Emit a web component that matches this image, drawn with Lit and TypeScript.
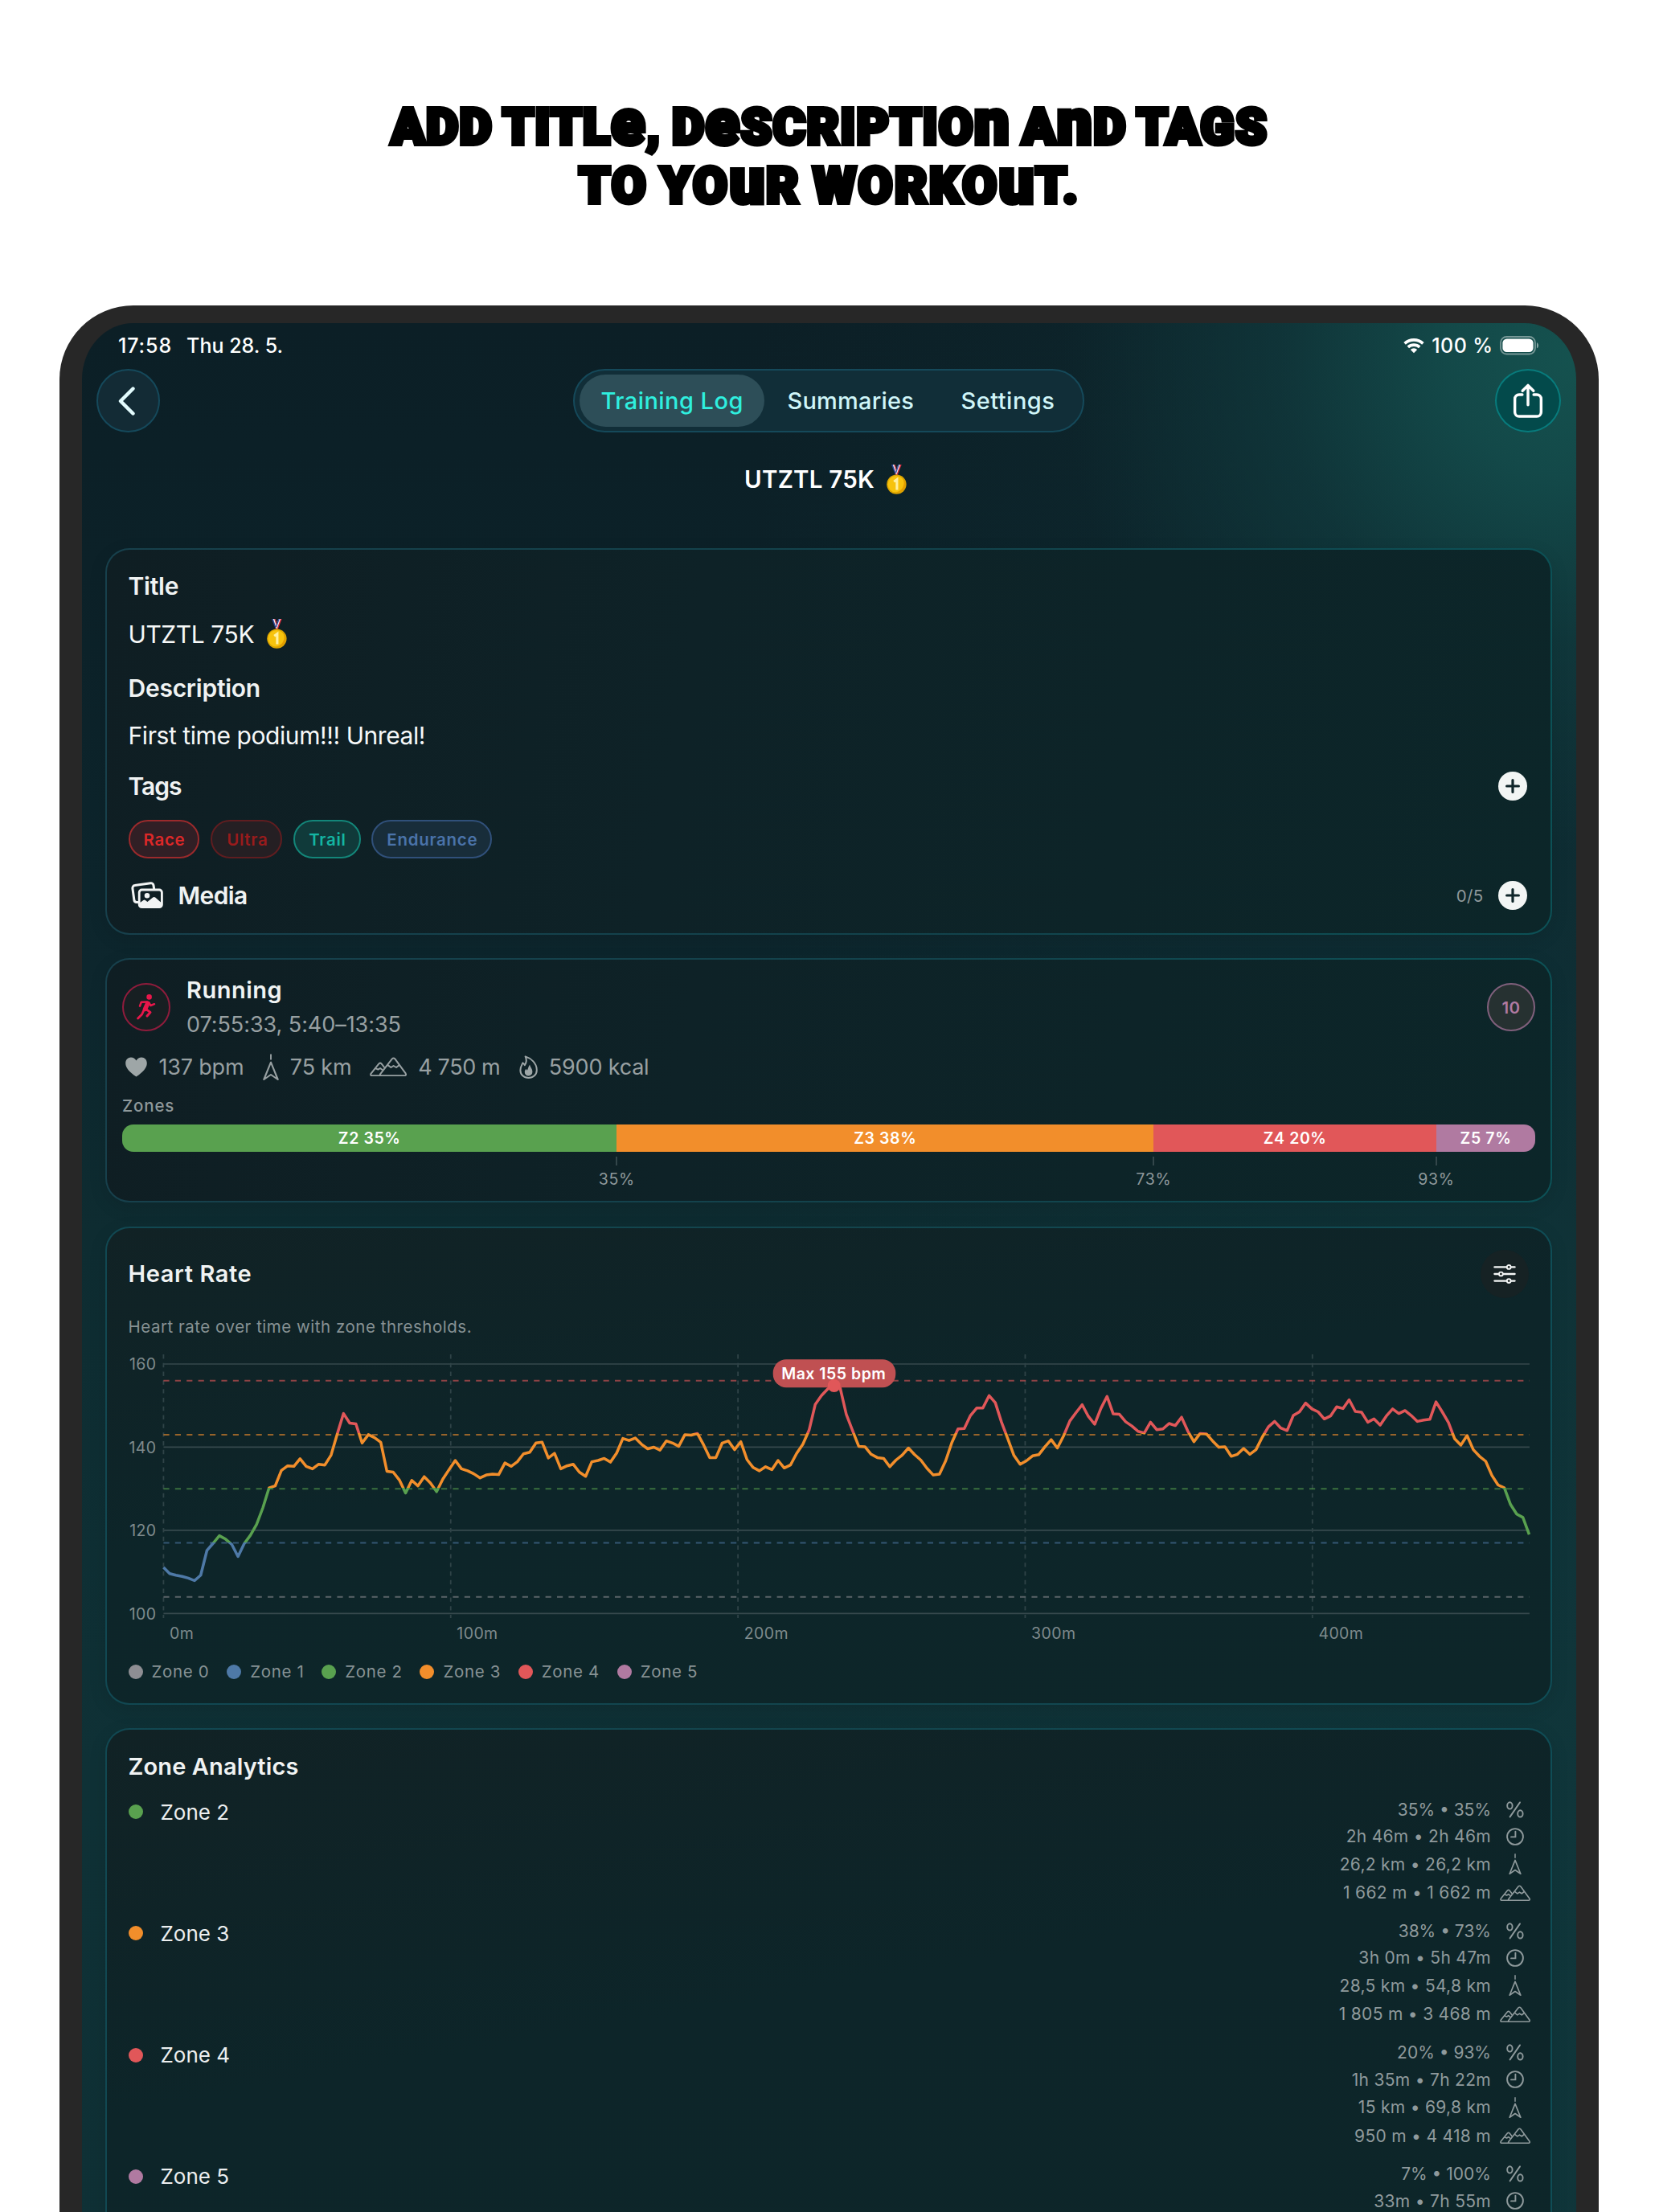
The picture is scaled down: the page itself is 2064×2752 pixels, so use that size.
import { LitElement, html, svg, css, nothing } from "lit";
import { customElement, property } from "lit/decorators.js";
import { classMap } from "lit/directives/class-map.js";
import { styleMap } from "lit/directives/style-map.js";

const ZONE_COLORS = ["#8e8e93", "#4e79a7", "#59a14f", "#f28e2b", "#e15759", "#b07aa1"];

const HEADLINE = ["ADD TITLe, DeSCRIPTIOn AnD TAGS", "TO YOuR WORKOuT."];

const TAGS = [
  { label: "Race", kind: "race" },
  { label: "Ultra", kind: "ultra" },
  { label: "Trail", kind: "trail" },
  { label: "Endurance", kind: "endurance" },
];

const SHARES = [
  { zone: 2, pct: 35, sum: 35 },
  { zone: 3, pct: 38, sum: 73 },
  { zone: 4, pct: 20, sum: 93 },
  { zone: 5, pct: 7, sum: 100 },
];

interface Totals { zone: number; pct: string; time: string; dist?: string; climb?: string }

const ANALYTICS: Totals[] = [
  { zone: 2, pct: "35% • 35%", time: "2h 46m • 2h 46m", dist: "26,2 km • 26,2 km", climb: "1 662 m • 1 662 m" },
  { zone: 3, pct: "38% • 73%", time: "3h 0m • 5h 47m", dist: "28,5 km • 54,8 km", climb: "1 805 m • 3 468 m" },
  { zone: 4, pct: "20% • 93%", time: "1h 35m • 7h 22m", dist: "15 km • 69,8 km", climb: "950 m • 4 418 m" },
  { zone: 5, pct: "7% • 100%", time: "33m • 7h 55m" },
];

/* Heart rate samples, evenly spaced over the workout. */
const HR = [
  111.1, 109.6, 109.2, 108.9, 108.5, 107.9, 109.2, 115.2, 116.9, 118.7, 117.9, 116.6, 113.7, 116.8, 118.8, 121.4,
  125.4, 130.2, 130.7, 134.4, 135.5, 135.4, 137.2, 135.4, 134.8, 135.9, 135.7, 138.1, 143.2, 148.1, 145.8, 145.6,
  141.0, 143.0, 142.3, 141.2, 134.2, 134.0, 132.1, 129.0, 132.0, 130.7, 132.9, 131.4, 129.3, 132.3, 134.6, 136.8,
  134.8, 134.3, 133.6, 132.6, 133.3, 133.5, 133.4, 136.2, 135.4, 136.5, 138.4, 138.8, 141.0, 141.2, 137.4, 138.5,
  134.8, 135.5, 135.9, 134.0, 133.0, 136.5, 136.8, 137.3, 136.4, 138.6, 142.1, 141.6, 142.2, 140.7, 139.6, 140.0,
  139.3, 141.5, 141.0, 140.2, 143.0, 142.9, 143.3, 140.6, 137.5, 137.5, 141.0, 141.5, 139.4, 141.3, 137.0, 135.1,
  134.3, 135.3, 134.6, 136.8, 135.0, 135.7, 138.5, 140.7, 144.1, 150.3, 152.4, 154.0, 155.0, 154.3, 147.9, 144.0,
  140.2, 140.1, 138.3, 137.5, 137.3, 135.3, 136.9, 138.1, 139.8, 138.2, 136.9, 134.9, 133.3, 133.5, 136.7, 141.1,
  144.4, 144.5, 147.6, 149.4, 149.4, 152.4, 150.7, 146.0, 142.1, 138.0, 135.9, 136.7, 137.9, 138.2, 140.1, 141.8,
  139.8, 142.7, 146.3, 148.3, 150.2, 147.4, 145.5, 149.3, 152.2, 148.0, 147.9, 146.1, 145.1, 143.8, 143.4, 146.0,
  144.2, 144.4, 145.7, 145.2, 147.2, 143.9, 141.3, 143.3, 143.2, 141.5, 140.0, 140.1, 137.8, 138.3, 139.7, 138.3,
  139.4, 142.4, 144.9, 146.2, 144.6, 144.0, 147.6, 148.5, 150.6, 149.2, 148.5, 146.8, 147.5, 149.7, 149.3, 151.4,
  148.6, 148.4, 146.0, 146.8, 145.3, 147.5, 149.2, 148.1, 148.8, 147.6, 146.2, 146.5, 146.7, 150.9, 148.5, 145.9,
  142.0, 140.5, 142.8, 139.4, 137.8, 136.6, 133.2, 130.9, 130.2, 126.2, 123.9, 123.1, 119.0,
];

const ICONS = {
  back: () => svg`<path d="M21.5 4.5 6 20 21.5 35.5" fill="none" stroke="#e2fbfd" stroke-width="4.4" stroke-linecap="round" stroke-linejoin="round"/>`,
  share: () => svg`<g fill="none" stroke="#fff" stroke-width="3.6" stroke-linecap="round" stroke-linejoin="round">
    <path d="M12.5 14.5H8.4A5.6 5.6 0 0 0 2.8 20.1V37.4A5.6 5.6 0 0 0 8.4 43H31.6A5.6 5.6 0 0 0 37.2 37.4V20.1A5.6 5.6 0 0 0 31.6 14.5H27.5"/>
    <path d="M20 28V3M12.8 9.6 20 2.4 27.2 9.6"/></g>`,
  wifi: () => svg`<g fill="none" stroke="#fff" stroke-width="3.6"><path d="M1.6 7.4a16.6 16.6 0 0 1 22.8 0"/><path d="M5.8 11.9a10.6 10.6 0 0 1 14.4 0"/></g>
    <path d="M13 19.2 8.8 14.9a6.1 6.1 0 0 1 8.4 0z" fill="#fff"/>`,
  battery: () => svg`<rect x="1" y="1" width="43" height="21.5" rx="7.4" fill="none" stroke="#fff" stroke-opacity=".42" stroke-width="1.8"/>
    <rect x="3.4" y="3.4" width="38.2" height="16.7" rx="5.2" fill="#fff"/><path d="M46 8.2c2.6 1 2.6 6.1 0 7.1z" fill="#fff" fill-opacity=".5"/>`,
  medal: () => svg`<g transform="translate(12.3 0) scale(.76 1) translate(-12 0)"><path d="M3.6 0H9L14.6 11.5 11 14.5z" fill="#27408f"/><path d="M6 0H9.4L14 10.6 12 12.6z" fill="#f3f3f3"/><path d="M8 0H9.8L13.6 9.4 12.6 11z" fill="#c9283a"/>
    <path d="M20.4 0H15L9.8 11.5 13 14.5z" fill="#d92a3c"/><path d="M18.2 0H15L10.6 10.6 12.2 12.6z" fill="#f3f3f3"/><path d="M16.6 0H14.6L10.6 9.6 11.6 11z" fill="#2c4aa0"/></g>
    <circle cx="12.4" cy="24.6" r="12.2" fill="#dba400"/><circle cx="12" cy="24.4" r="10.4" fill="#f7c30c"/><path d="M20.5 17.5A10.4 10.4 0 0 1 10 34.6 12 12 0 0 0 20.5 17.5z" fill="#e39d00"/>
    <path d="M9.2 21.2 12.9 18.6V31.4" fill="none" stroke="#fff0a0" stroke-width="3.1"/>`,
  plus: () => svg`<circle cx="18" cy="18" r="18" fill="#f2f5f4"/><path d="M18 10.6V25.4M10.6 18H25.4" stroke="#10262a" stroke-width="3.2" stroke-linecap="round"/>`,
  media: () => svg`<path d="M8.6 25.6H7.1A3.2 3.2 0 0 1 3.9 22.8L1.9 8.2A3.2 3.2 0 0 1 4.7 4.6L24.4 1.8A3.2 3.2 0 0 1 28 4.5L28.6 8.4" fill="none" stroke="#f2f4f4" stroke-width="3" stroke-linecap="round"/>
    <path fill-rule="evenodd" d="M13.4 8.6H35.2A4.6 4.6 0 0 1 39.8 13.2V28.4A4.6 4.6 0 0 1 35.2 33H13.4A4.6 4.6 0 0 1 8.8 28.4V13.2A4.6 4.6 0 0 1 13.4 8.6zM13.6 11.4A2 2 0 0 0 11.6 13.4V25.8L15.4 22.9Q16.6 22.1 17.8 22.9L20.4 25 27.2 19.6Q28.7 18.5 30.2 19.6L37 25.4V13.4A2 2 0 0 0 35 11.4zM20 13.9A3.3 3.3 0 1 1 20 20.5 3.3 3.3 0 0 1 20 13.9z" fill="#f2f4f4"/>`,
  run: () => svg`<g fill="none" stroke="#e8174b" stroke-linecap="round" stroke-linejoin="round"><path d="M13.8 11.2 10.6 18.4" stroke-width="5.6"/>
    <path d="M12.6 9.4 5.8 9.8 4 14.6" stroke-width="2.5"/><path d="M15.4 10.6 17.4 14 22 12.2" stroke-width="2.5"/>
    <path d="M11.8 18.6 17 22.4 13 27" stroke-width="3"/><path d="M9 19.6 6.6 25 1.6 30" stroke-width="2.8"/></g><circle cx="15.6" cy="3.4" r="3.3" fill="#e8174b"/>`,
  heart: () => svg`<path d="M13.5 24.6C5 18.6.2 13.6.2 7.7.2 3.4 3.2.5 6.9.5c2.8 0 5 1.4 6.6 4 1.6-2.6 3.8-4 6.6-4 3.7 0 6.7 2.9 6.7 7.2 0 5.9-4.8 10.9-13.3 16.9z" fill="#9ea6a7"/>`,
  arrow: () => svg`<path d="M10 .4V7.4" stroke="currentColor" stroke-width="1.9"/><path d="M10 10.6 1.3 32 10 26 18.7 32z" fill="none" stroke="currentColor" stroke-width="2.1" stroke-linejoin="round"/>`,
  mountain: () => svg`<g fill="none" stroke="currentColor" stroke-width="2" stroke-linejoin="round" stroke-linecap="round"><path d="M13.6 23.2H43.4Q46 22.8 44.6 20.4L31.4 2.4Q29.6.4 27.8 2.4L13 21.4Q12.4 23 13.6 23.2z"/>
    <path d="M13.6 23.2H2.4Q.4 22.8 1.6 20.6L11.4 8.4Q13 6.8 14.6 8.4L18.2 13"/><path d="M22.8 10.4 26.4 13 29.6 11 33 13 36.6 10.2M7.6 14.4 10.4 15.6 13 14 15.4 15.8"/></g>`,
  flame: () => svg`<path d="M7.6 1.4C14.6 3.6 21.8 9.6 21.8 18.2 21.8 24 17.4 28 11.6 28 5.6 28 1.4 24 1.4 18.4 1.4 14.6 3 12.2 4.4 9.4 5.6 10 6.4 11 6.8 12.2 9 9 9.4 5 7.6 1.4z" fill="none" stroke="#9ea6a7" stroke-width="2" stroke-linejoin="round"/>
    <path d="M13.2 11.6C13.6 15 16.4 16.4 16.4 20.6 16.4 23.6 14.4 25.4 11.6 25.4 8.8 25.4 6.8 23.6 6.8 20.9 6.8 19.2 7.4 18 8.4 17 9 17.6 9.4 18 9.8 18.8 11.2 16.6 11.2 14 13.2 11.6z" fill="#9ea6a7"/>`,
  percent: () => svg`<g fill="none" stroke="currentColor" stroke-width="1.9" stroke-linecap="round"><path d="M17 1.4 4.6 19.4"/><ellipse cx="4.4" cy="5.4" rx="3.2" ry="4.1"/><ellipse cx="17.4" cy="15.4" rx="3.2" ry="4.1"/></g>`,
  clock: () => svg`<g fill="none" stroke="currentColor" stroke-width="1.9" stroke-linecap="round"><circle cx="11" cy="11" r="9.9"/><path d="M11.4 4.6V11.4H6"/></g>`,
  sliders: () => svg`<g stroke="#f4f6f6" stroke-width="2.3" stroke-linecap="round"><path d="M1.4 3.4H26.6M1.4 12H26.6M1.4 20.6H26.6"/></g>
    <g fill="#17201f" stroke="#f4f6f6" stroke-width="1.9"><circle cx="19.2" cy="3.4" r="2.4"/><circle cx="9.4" cy="12" r="2.4"/><circle cx="19.2" cy="20.6" r="2.4"/></g>`,
};

type IconName = keyof typeof ICONS;

const icon = (name: IconName, w: number, h: number, vb = `0 0 ${w} ${h}`) =>
  html`<svg class="icon" width=${w} height=${h} viewBox=${vb}>${ICONS[name]()}</svg>`;

/* Heart rate chart with gridlines, zone thresholds and the peak badge. */
@customElement("hr-chart")
export class HrChart extends LitElement {
  static styles = css`
    :host { display: block; height: 386px; }
    svg { display: block; overflow: visible; }
    text { font-family: Inter, "Liberation Sans", sans-serif; }
    .axis { font-size: 19.5px; letter-spacing: 0.4px; fill: #7f8b8d; }
    .max { font-size: 19.5px; font-weight: 600; letter-spacing: 0.5px; fill: #fff; }
  `;

  private x(i: number) { return 43.4 + i * 7.723; }
  private y(bpm: number) { return 25 + (160 - bpm) * 5.173; }

  render() {
    const thresholds = [[156, 4], [143, 3], [130, 2], [117, 1], [104, 0]];
    const off = (bpm: number) => (this.y(bpm) - this.y(160)) / (this.y(100) - this.y(160));
    const stops: [number, number, number][] = [[143.35, 4, 3], [130.2, 3, 2], [117, 2, 1]];
    return html`<svg width="1744" height="386" viewBox="0 0 1744 386">
      <defs><linearGradient id="zones" gradientUnits="userSpaceOnUse" x1="0" x2="0" y1=${this.y(160)} y2=${this.y(100)}>
        ${stops.map(([bpm, up, down]) => svg`<stop offset=${off(bpm)} stop-color=${ZONE_COLORS[up]}/><stop offset=${off(bpm)} stop-color=${ZONE_COLORS[down]}/>`)}
      </linearGradient></defs>
      ${[160, 140, 120, 100].map((v) => svg`
        <path d="M43.4 ${this.y(v)}H1742.9" stroke="#36494d" stroke-width="1.7"/>
        <text class="axis" x="34.5" y=${this.y(v) + 7.2} text-anchor="end">${v}</text>`)}
      ${[0, 100, 200, 300, 400].map((v) => svg`
        <path d="M${43.4 + v * 3.5735} 13V341" stroke="#2f4347" stroke-width="1.8" stroke-dasharray="5.4"/>
        <text class="axis" x=${51 + v * 3.5735} y="366.7">${v}m</text>`)}
      ${thresholds.map(([v, z]) => svg`<path d="M43.4 ${this.y(v)}H1742.9" stroke=${ZONE_COLORS[z]} stroke-opacity=".6" stroke-width="2" stroke-dasharray="7.2"/>`)}
      <path d=${"M" + HR.map((v, i) => `${this.x(i).toFixed(1)} ${this.y(v).toFixed(1)}`).join("L")}
        fill="none" stroke="url(#zones)" stroke-width="3.5" stroke-linejoin="round"/>
      <rect x="801.7" y="19.2" width="152.6" height="35" rx="16.5" fill="#c05052"/>
      <circle cx="877.7" cy="52" r="8" fill="#e15759"/>
      <text class="max" x="877.3" y="43.6" text-anchor="middle">Max 155 bpm</text>
    </svg>`;
  }
}

/* Totals of one heart rate zone: share, time, distance and climb. */
@customElement("zone-totals")
export class ZoneTotals extends LitElement {
  @property({ attribute: false }) item!: Totals;

  static styles = css`
    :host { display: flex; justify-content: space-between; height: 151.3px; }
    .name { display: flex; align-items: center; height: 40px; font-size: 26px; color: #eceff0; }
    .dot { width: 18px; height: 18px; border-radius: 50%; margin-right: 22px; }
    .rows { display: grid; grid-template-rows: 34px 33px 36px 35px; }
    .row { display: grid; grid-template-columns: 1fr 59px; align-items: center; justify-items: center; font-size: 21px; letter-spacing: 0.3px; color: #8f9a9c; white-space: pre; }
    .row.pct { letter-spacing: 0; }
    .row span { justify-self: end; }
    .icon { display: block; }
  `;

  render() {
    const it = this.item;
    return html`
      <div class="name"><span class="dot" style=${styleMap({ background: ZONE_COLORS[it.zone] })}></span>Zone ${it.zone}</div>
      <div class="rows">
        <div class="row pct"><span>${it.pct}</span>${icon("percent", 22, 21)}</div>
        <div class="row"><span>${it.time}</span>${icon("clock", 22, 22)}</div>
        ${it.dist ? html`<div class="row"><span>${it.dist}</span>${icon("arrow", 16, 26, "0 0 20 33")}</div>` : nothing}
        ${it.climb ? html`<div class="row"><span>${it.climb}</span>${icon("mountain", 38, 20, "0 0 46 24")}</div>` : nothing}
      </div>`;
  }
}

@customElement("app-root")
export class AppRoot extends LitElement {
  static styles = css`
    :host { display: block; width: 2064px; height: 2752px; overflow: hidden; background: #fff; font-family: Inter, "Liberation Sans", sans-serif; color: #f0f3f3; }
    * { box-sizing: border-box; }
    .icon { display: block; flex: none; }
    .page { height: 2752px; overflow: hidden; }

    .headline { margin: 0; height: 380px; padding-top: 122px; font: 900 61.5px/73px Roboto, Inter, sans-serif; color: #000; text-align: center; white-space: pre; -webkit-text-stroke: 6px #000; letter-spacing: 1.6px; word-spacing: -3px; }
    .headline div:last-child { letter-spacing: 2.9px; }
    .tall { font-size: 77px; line-height: 0; letter-spacing: 2px; }

    .device { width: 1915px; height: 2500px; margin-left: 74px; border: solid #272727; border-width: 22px 28px 0; border-radius: 92px 92px 0 0; background: #272727; }
    .screen { display: flex; flex-direction: column; height: 2478px; border-top-left-radius: 64px 70px; border-top-right-radius: 64px 70px;
      background: radial-gradient(ellipse 640px 620px at 100% 40px, #15524f 0%, rgba(20, 78, 77, .86) 25%, rgba(18, 66, 68, .5) 58%, rgba(15, 48, 54, 0) 100%),
        linear-gradient(90deg, rgba(16, 56, 62, 0) 45%, rgba(18, 66, 70, .28) 100%),
        linear-gradient(180deg, #0c1f26 0, #0c2128 300px, #0d262d 800px, #0e2c31 1130px, #0f3136 1800px, #0f3035 100%); }
    .screen > * { flex: none; }

    .status { display: flex; align-items: center; height: 56px; padding: 0 46.5px 0 45px; font-size: 25px; font-weight: 500; color: #fff; }
    .status .clock { letter-spacing: 0.9px; margin-right: 18px; }
    .status .level { margin: 0 8px 0 9px; letter-spacing: 0.4px; }
    .status .grow { flex: 1; }

    .nav { display: grid; grid-template-columns: 1fr auto 1fr; align-items: center; height: 81px; padding: 0 19px 0 18px; }
    .round { display: flex; align-items: center; justify-content: center; width: 79px; height: 79px; border: 2px solid #15495b; border-radius: 50%; background: #132b35; }
    .round.prev { padding-right: 5px; }
    .round.share { justify-self: end; width: 82px; background: #034a4b; border-color: #087b7c; }
    .tabs { display: flex; align-items: center; width: 636px; height: 79px; margin-right: 1px; border: 2px solid #15495a; border-radius: 40px; background: #112e38; padding-left: 6px; font-size: 29px; font-weight: 500; color: #cff5f8; }
    .tab { display: flex; align-items: center; height: 65px; border-radius: 33px; letter-spacing: 0.35px; }
    .tab.log { width: 230px; padding-left: 27px; letter-spacing: 0.45px; color: #2fefdf; background: #2d4e58; }
    .tab.sum { width: 216px; padding-left: 29px; letter-spacing: 0.22px; }
    .tab.set { padding-left: 29px; letter-spacing: 0.48px; }

    .caption { display: flex; align-items: center; justify-content: center; gap: 15px; height: 114px; margin-bottom: 29px; padding-right: 9px; font-size: 29.5px; font-weight: 600; letter-spacing: 0.2px; color: #fff; }

    .card { width: 1799.5px; margin: 0 0 29.5px 29px; border: 2px solid transparent; border-radius: 30px; box-shadow: 0 6px 22px rgba(0, 0, 0, .1);
      background: linear-gradient(100deg, #0f1e23 0%, #0e2227 40%, #0c2629 100%) padding-box, linear-gradient(90deg, #17404c, #12434c 60%, #0c5156) border-box; }
    .card.teal { background: linear-gradient(170deg, #112225 0%, #0d2529 45%, #0d2629 100%) padding-box, linear-gradient(90deg, #114852, #13454d 50%, #0f4d56) border-box; }

    .notes { height: 480.5px; padding: 14.5px 29px 0 26.5px; display: grid; grid-template-rows: 60px 60px 74px 45px 81px 51px 89px; align-items: center; font-size: 30px; }
    .label { font-weight: 600; letter-spacing: -0.25px; }
    .value { display: flex; align-items: center; gap: 16px; letter-spacing: -0.42px; color: #f6f8f8; }
    .line { display: flex; align-items: center; }
    .line .label { flex: 1; }
    .line .label.tags { letter-spacing: -1px; }
    .line .label.media { margin-left: 18px; letter-spacing: -0.6px; }
    .count { font-size: 20.5px; letter-spacing: 0.3px; color: #8f999b; margin-right: 18px; }
    .line svg:first-child { margin-left: 3px; }
    .chips { display: flex; gap: 13.8px; }
    .chip { height: 48.5px; padding: 0 16px 0 17px; line-height: 45px; border: 2px solid; border-radius: 25px; font-size: 20.5px; font-weight: 600; letter-spacing: 0.7px; }
    .race { color: #dd2828; background: #311f25; border-color: #9b2a2c; }
    .ultra { color: #991b1c; background: #251f23; border-color: #5f1d20; padding-left: 18px; }
    .trail { color: #14b5a2; background: #103a3a; border-color: #138679; }
    .endurance { color: #4a73a9; background: #182d3a; border-color: #30507a; }

    .summary { height: 304px; padding: 11px 18.5px 0 19px; }
    .head { display: flex; align-items: center; height: 96px; }
    .badge { display: flex; align-items: center; justify-content: center; width: 60px; height: 60px; border-radius: 50%; border: 2px solid #8f1c3c; background: #171f22; }
    .badge.effort { border-color: #80607c; background: #263131; color: #b07aa1; font-size: 20.5px; font-weight: 600; letter-spacing: 0.5px; }
    .sport { flex: 1; padding-left: 20px; line-height: 43px; font-size: 29px; font-weight: 600; letter-spacing: 0.5px; }
    .sport small { display: block; font-size: 27px; font-weight: 400; letter-spacing: -0.06px; color: #98a0a2; }
    .stats { display: flex; align-items: center; height: 52px; padding-left: 3.5px; font-size: 27px; letter-spacing: -0.2px; color: #98a0a2; }
    .stats span { margin: 0 23.5px 0 15px; white-space: pre; }
    .stats .km { margin: 0 23px 0 14px; }
    .stats .climb { margin: 0 24px 0 14px; letter-spacing: -0.4px; }
    .stats .kcal { margin-left: 13.5px; }
    .small { font-size: 20.5px; font-weight: 500; letter-spacing: 0.85px; line-height: 45.5px; color: #8f999b; }
    .bar { display: flex; height: 34px; border-radius: 14px; overflow: hidden; }
    .bar div { display: flex; align-items: center; justify-content: center; font-size: 19.5px; font-weight: 600; letter-spacing: 0.6px; color: #fff; }
    .marks { display: flex; padding-top: 6px; }
    .marks .mark { display: flex; justify-content: flex-end; }
    .marks .mark span { display: flex; flex-direction: column; align-items: center; gap: 7px; width: 80px; margin-right: -40px; font-size: 19.5px; letter-spacing: 0.7px; line-height: 20px; color: #8f999b; }
    .marks i { width: 2px; height: 11px; background: #33464a; }

    .rate { height: 595px; padding: 13px 26.5px 0; }
    .rate .top { display: flex; align-items: center; justify-content: space-between; height: 88px; }
    .title { font-size: 29px; font-weight: 600; letter-spacing: 0.6px; }
    .tune { display: flex; align-items: center; justify-content: center; width: 60px; height: 60px; border-radius: 50%; background: #162224; }
    .note { height: 43px; line-height: 43px; font-size: 20.5px; letter-spacing: 0.52px; color: #879294; }
    .legend { display: flex; align-items: center; height: 44px; }
    .legend span { display: flex; align-items: center; gap: 11px; margin-right: 21.8px; font-size: 20.5px; letter-spacing: 0.65px; color: #879294; }
    .legend i { width: 18px; height: 18px; border-radius: 50%; }

    .analytics { height: 760px; padding: 12px 14.5px 0 26.5px; }
    .analytics .title { height: 70px; line-height: 67px; letter-spacing: 0.12px; }
  `;

  private headline(line: string) {
    return html`<div>${[...line].map((c) => (/[a-z]/.test(c) ? html`<span class="tall">${c}</span>` : c))}</div>`;
  }

  render() {
    return html`<main class="page">
      <h1 class="headline">${HEADLINE.map((l) => this.headline(l))}</h1>
      <div class="device"><div class="screen">
        <div class="status">
          <span class="clock">17:58</span><span>Thu 28. 5.</span><span class="grow"></span>
          ${icon("wifi", 26, 20)}<span class="level">100 %</span>${icon("battery", 49, 24)}
        </div>
        <nav class="nav">
          <div class="round prev">${icon("back", 27, 40)}</div>
          <div class="tabs"><div class="tab log">Training Log</div><div class="tab sum">Summaries</div><div class="tab set">Settings</div></div>
          <div class="round share">${icon("share", 38, 46, "0 0 40 46")}</div>
        </nav>
        <div class="caption">UTZTL 75K ${icon("medal", 25, 37)}</div>

        <section class="card notes">
          <div class="label">Title</div>
          <div class="value">UTZTL 75K ${icon("medal", 25, 37)}</div>
          <div class="label">Description</div>
          <div class="value">First time podium!!! Unreal!</div>
          <div class="line"><div class="label tags">Tags</div>${icon("plus", 36, 36)}</div>
          <div class="chips">${TAGS.map((t) => html`<div class=${classMap({ chip: true, [t.kind]: true })}>${t.label}</div>`)}</div>
          <div class="line">${icon("media", 41, 34)}<div class="label media">Media</div><span class="count">0/5</span>${icon("plus", 36, 36)}</div>
        </section>

        <section class="card summary">
          <div class="head">
            <div class="badge">${icon("run", 24, 32)}</div>
            <div class="sport">Running<small>07:55:33, 5:40–13:35</small></div>
            <div class="badge effort">10</div>
          </div>
          <div class="stats">
            ${icon("heart", 27, 25)}<span>137 bpm</span>${icon("arrow", 20, 33)}<span class="km">75 km</span>${icon("mountain", 46, 24)}<span class="climb">4 750 m</span>${icon("flame", 23, 29)}<span class="kcal">5900 kcal</span>
          </div>
          <div class="small">Zones</div>
          <div class="bar">${SHARES.map((s) => html`<div style=${styleMap({ width: `${s.pct}%`, background: ZONE_COLORS[s.zone] })}>Z${s.zone} ${s.pct}%</div>`)}</div>
          <div class="marks">${SHARES.map((s) => html`<div class="mark" style=${styleMap({ width: `${s.pct}%` })}>${s.sum < 100 ? html`<span><i></i>${s.sum}%</span>` : nothing}</div>`)}</div>
        </section>

        <section class="card teal rate">
          <div class="top"><div class="title">Heart Rate</div><div class="tune">${icon("sliders", 28, 24)}</div></div>
          <div class="note">Heart rate over time with zone thresholds.</div>
          <hr-chart></hr-chart>
          <div class="legend">${ZONE_COLORS.map((c, i) => html`<span><i style=${styleMap({ background: c })}></i>Zone ${i}</span>`)}</div>
        </section>

        <section class="card teal analytics">
          <div class="title">Zone Analytics</div>
          ${ANALYTICS.map((a) => html`<zone-totals .item=${a}></zone-totals>`)}
        </section>
      </div></div>
    </main>`;
  }
}
